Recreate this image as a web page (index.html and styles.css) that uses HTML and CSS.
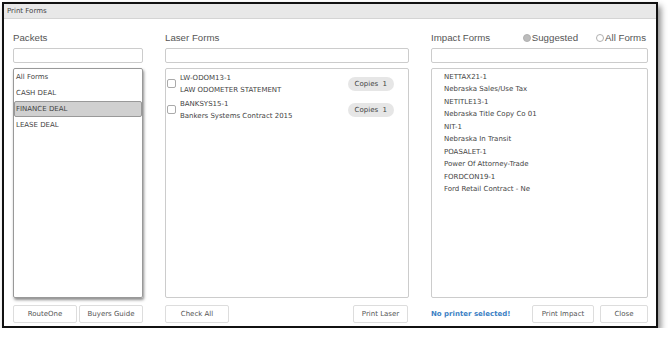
FILE: index.html
```html
<!DOCTYPE html>
<html lang="en">
<head>
    <meta charset="UTF-8">
    <title>Print Forms</title>
    <link rel="stylesheet" href="styles.css">
</head>
<body>
    <div class="window">
        <div class="titlebar">Print Forms</div>
        <div class="content">
            <div class="column">
                <div class="heading">Packets</div>
                <input class="search" type="text">
                <div class="list packets">
                    <div class="packet">All Forms</div>
                    <div class="packet">CASH DEAL</div>
                    <div class="packet selected">FINANCE DEAL</div>
                    <div class="packet">LEASE DEAL</div>
                </div>
                <div class="footer">
                    <button class="btn wide">RouteOne</button>
                    <button class="btn wide">Buyers Guide</button>
                </div>
            </div>

            <div class="column">
                <div class="heading">Laser Forms</div>
                <input class="search" type="text">
                <div class="list laser">
                    <div class="laser-item">
                        <span class="check"></span>
                        <div class="form-text">
                            <div>LW-ODOM13-1</div>
                            <div>LAW ODOMETER STATEMENT</div>
                        </div>
                        <span class="copies">Copies&nbsp; 1</span>
                    </div>
                    <div class="laser-item">
                        <span class="check"></span>
                        <div class="form-text">
                            <div>BANKSYS15-1</div>
                            <div>Bankers Systems Contract 2015</div>
                        </div>
                        <span class="copies">Copies&nbsp; 1</span>
                    </div>
                </div>
                <div class="footer spread">
                    <button class="btn check-all">Check All</button>
                    <button class="btn print-laser">Print Laser</button>
                </div>
            </div>

            <div class="column">
                <div class="heading impact-head">
                    <span>Impact Forms</span>
                    <span class="radios">
                        <span class="radio"><span class="dot filled"></span>Suggested</span>
                        <span class="radio"><span class="dot"></span>All Forms</span>
                    </span>
                </div>
                <input class="search" type="text">
                <div class="list impact">
                    <div class="impact-item"><div>NETTAX21-1</div><div>Nebraska Sales/Use Tax</div></div>
                    <div class="impact-item"><div>NETITLE13-1</div><div>Nebraska Title Copy Co 01</div></div>
                    <div class="impact-item"><div>NIT-1</div><div>Nebraska In Transit</div></div>
                    <div class="impact-item"><div>POASALET-1</div><div>Power Of Attorney-Trade</div></div>
                    <div class="impact-item"><div>FORDCON19-1</div><div>Ford Retail Contract - Ne</div></div>
                </div>
                <div class="footer">
                    <span class="warning">No printer selected!</span>
                    <button class="btn print-impact">Print Impact</button>
                    <button class="btn close">Close</button>
                </div>
            </div>
        </div>
    </div>
</body>
</html>
```

FILE: styles.css
```css
body {
    margin: 0;
    background: white;
    font-family: "DejaVu Sans", Verdana, sans-serif;
    font-size: 7px;
    color: #444;
}
.window {
    margin: 2px 0 0 2px;
    width: 652px;
    height: 322px;
    border: 2px solid #111;
    background: white;
    box-shadow: 3px 4px 6px rgba(0,0,0,0.45);
}
.titlebar {
    height: 14px;
    line-height: 14px;
    padding-left: 3px;
    background: #e8e8e8;
    border-bottom: 1px solid #d4d4d4;
    color: #444;
}
.content {
    display: grid;
    grid-template-columns: 130px 244px 217px;
    column-gap: 22px;
    padding: 12px 0 0 9px;
}
.column {
    display: flex;
    flex-direction: column;
}
.heading {
    height: 14px;
    line-height: 14px;
    margin-bottom: 3px;
    font-family: "Liberation Sans", Arial, sans-serif;
    font-size: 9.7px;
    color: #555;
}
.impact-head {
    display: flex;
    justify-content: space-between;
}
.radios {
    display: flex;
    gap: 18px;
    padding-right: 2px;
}
.radio {
    display: flex;
    align-items: center;
    gap: 1px;
}
.dot {
    width: 8px;
    height: 8px;
    border-radius: 50%;
    border: 1px solid #b0b0b0;
    box-sizing: border-box;
    background: white;
}
.dot.filled {
    background: #bcbcbc;
}
.search {
    height: 15px;
    margin: 0 0 5px 0;
    padding: 0;
    box-sizing: border-box;
    border: 1px solid #ccc;
    border-radius: 2px;
}
.list {
    height: 230px;
    box-sizing: border-box;
    border: 1px solid #ccc;
    border-radius: 2px;
    padding-top: 2px;
}
.packets {
    border-color: #999;
    box-shadow: 1px 2px 3px rgba(0,0,0,0.45);
    padding-top: 0;
}
.packet {
    height: 16px;
    line-height: 16px;
    padding-left: 2px;
    box-sizing: border-box;
}
.packet.selected {
    background: #d0d0d0;
    border: 1px solid #999;
    border-radius: 2px;
    line-height: 14px;
    padding-left: 1px;
}
.laser-item {
    display: flex;
    align-items: center;
    height: 26px;
    padding: 0 14px 0 1px;
}
.check {
    width: 7px;
    height: 7px;
    border: 1px solid #aaa;
    border-radius: 2px;
    margin: 0 4px 2px 0;
}
.form-text {
    flex: 1;
    line-height: 12px;
}
.copies {
    background: #e6e6e6;
    border-radius: 7px;
    padding: 0 7px;
    height: 14px;
    line-height: 14px;
}
.impact-item {
    line-height: 12px;
    padding: 0 0 1px 12px;
}
.footer {
    display: flex;
    align-items: center;
    gap: 2px;
    margin-top: 7px;
}
.spread {
    justify-content: space-between;
}
.btn {
    height: 18px;
    padding: 0;
    background: white;
    border: 1px solid #ddd;
    border-radius: 2px;
    font-family: "DejaVu Sans", Verdana, sans-serif;
    font-size: 7px;
    color: #555;
    white-space: nowrap;
}
.btn.wide {
    flex: 1;
}
.check-all {
    width: 64px;
}
.print-laser {
    width: 55px;
    margin-right: 1px;
}
.warning {
    flex: 1;
    color: #3b7fc4;
    font-weight: bold;
}
.print-impact {
    width: 62px;
}
.close {
    margin-left: 4px;
    width: 48px;
}
```
